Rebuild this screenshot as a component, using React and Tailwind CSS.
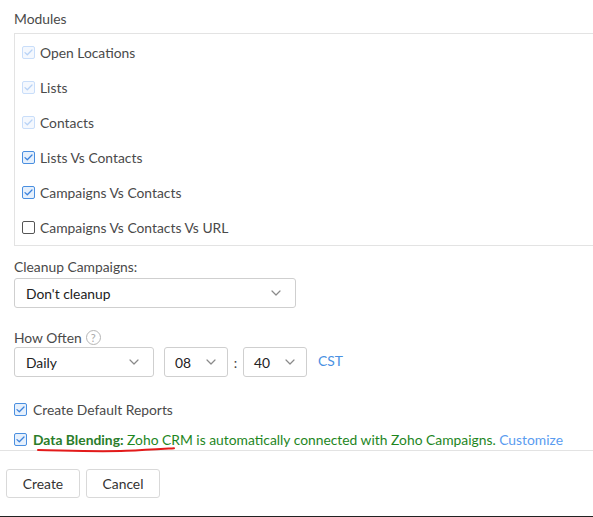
import React from "react";

const Chevron = () => (
  <svg width="10" height="6" viewBox="0 0 10 6" fill="none" className="shrink-0">
    <path d="M1 1l4 4 4-4" stroke="#8a8a8a" strokeWidth="1.2" strokeLinecap="round" strokeLinejoin="round" />
  </svg>
);

const Check = ({ color }) => (
  <svg width="9" height="7" viewBox="0 0 9 7" fill="none">
    <path d="M1 3.6l2.3 2.2L8 1" stroke={color} strokeWidth="1.3" strokeLinecap="round" strokeLinejoin="round" />
  </svg>
);

const Box = ({ state }) => {
  if (state === "disabled")
    return (
      <span className="w-[13px] h-[13px] rounded-[2px] border border-[#c9defa] bg-[#f4f8fe] flex items-center justify-center shrink-0">
        <Check color="#b7d2f6" />
      </span>
    );
  if (state === "checked")
    return (
      <span className="w-[13px] h-[13px] rounded-[2px] border border-[#4a8fe0] bg-[#e6f0fc] flex items-center justify-center shrink-0">
        <Check color="#3b82dc" />
      </span>
    );
  return <span className="w-[13px] h-[13px] rounded-[2px] border border-[#555] bg-white shrink-0" />;
};

const Select = ({ value, className }) => (
  <div className={`h-[30px] border border-[#cfcfcf] rounded-[3px] flex items-center justify-between bg-white ${className}`}>
    <span className="text-[#222] leading-[17px]">{value}</span>
    <Chevron />
  </div>
);

export default function App() {
  const modules = [
    ["Open Locations", "disabled"],
    ["Lists", "disabled"],
    ["Contacts", "disabled"],
    ["Lists Vs Contacts", "checked"],
    ["Campaigns Vs Contacts", "checked"],
    ["Campaigns Vs Contacts Vs URL", "none"],
  ];
  return (
    <div
      className="w-[593px] h-[517px] bg-white relative overflow-hidden border-b border-[#222] text-[13.85px] leading-[17px] text-[#4a4a4a]"
      style={{ fontFamily: "Lato, 'Open Sans', sans-serif" }}
    >
      <div className="pl-[14px] pt-[10px]">
        <div>Modules</div>
        <div className="mt-[6px] w-[600px] border border-[#e3e3e3] pt-[1px]">
          {modules.map(([label, st]) => (
            <div key={label} className="h-[35px] flex items-center pl-[7px] gap-[5px]">
              <Box state={st} />
              <span>{label}</span>
            </div>
          ))}
        </div>

        <div className="mt-[12px]">Cleanup Campaigns:</div>
        <Select value="Don't cleanup" className="mt-[3px] w-[282px] pl-[11px] pr-[14px]" />

        <div className="mt-[21px] flex items-center gap-[4px]">
          <span>How Often</span>
          <span className="w-[15px] h-[15px] rounded-full border border-[#b5b5b5] text-[#a8a8a8] text-[11px] leading-none flex items-center justify-center">
            ?
          </span>
        </div>
        <div className="mt-[1px] flex items-center">
          <Select value="Daily" className="w-[140px] pl-[11px] pr-[14px]" />
          <Select value="08" className="ml-[10px] w-[64px] pl-[10px] pr-[11px]" />
          <span className="w-[15px] text-center text-[#444]">:</span>
          <Select value="40" className="w-[64px] pl-[10px] pr-[11px]" />
          <span className="ml-[11px] text-[#4a90e2] -mt-[3px]">CST</span>
        </div>

        <div className="mt-[24px] flex items-center gap-[6px]">
          <Box state="checked" />
          <span>Create Default Reports</span>
        </div>
        <div className="mt-[13px] flex items-center gap-[6px] relative">
          <Box state="checked" />
          <span className="text-[#1e861e]">
            <span className="font-bold text-[#2a7d2a]">Data Blending:</span> Zoho CRM is automatically connected with Zoho Campaigns.{" "}
            <span className="text-[#5a9cf0]">Customize</span>
          </span>
          <svg className="absolute left-[22px] top-[15px]" width="140" height="8" viewBox="0 0 140 8" fill="none">
            <path d="M2 4 C 30 4.5, 60 6, 90 4.8 C 110 4, 125 3, 138 2.2" stroke="#e31b1b" strokeWidth="2" strokeLinecap="round" />
          </svg>
        </div>
      </div>
      <div className="mt-[2px] border-t border-[#e3e3e3]" />
      <div className="pl-[6px] pt-[18px] flex gap-[6px]">
        <button className="w-[74px] h-[29px] border border-[#d9d9d9] rounded-[3px] text-[#333] bg-white">Create</button>
        <button className="w-[74px] h-[29px] border border-[#d9d9d9] rounded-[3px] text-[#333] bg-white">Cancel</button>
      </div>
    </div>
  );
}
